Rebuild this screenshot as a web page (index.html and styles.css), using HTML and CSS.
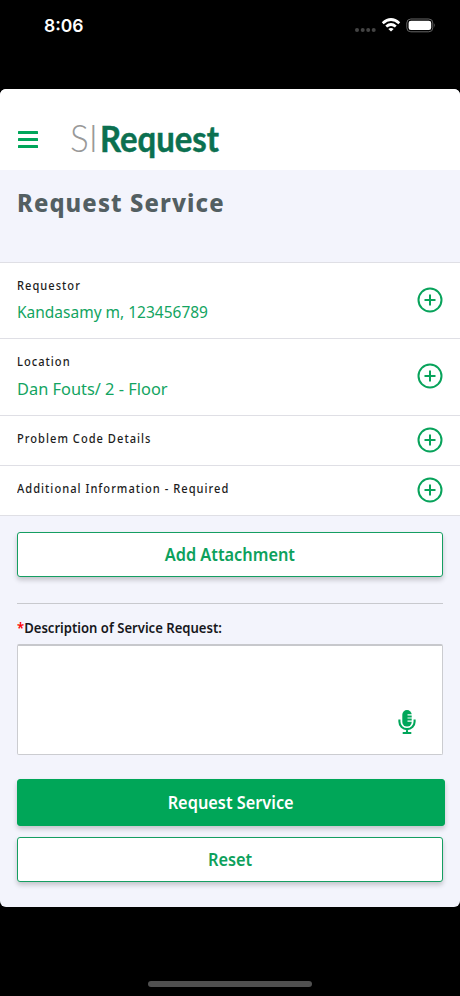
FILE: index.html
```html
<!DOCTYPE html>
<html lang="en">
<head>
<meta charset="utf-8">
<title>Request Service</title>
<link rel="stylesheet" href="styles.css">
</head>
<body>
<div class="status">
  <span class="time">8:06</span>
  <svg class="status-icons" width="84" height="20" viewBox="0 0 84 20">
    <g fill="#444"><circle cx="5" cy="14" r="2"/><circle cx="10.7" cy="14" r="2"/><circle cx="16.2" cy="14" r="2"/><circle cx="21.7" cy="14" r="2"/></g>
    <g fill="none" stroke="#fff" stroke-width="2.7"><path d="M30.7 7.2Q39 -.2 47.3 7.2"/><path d="M34.200 10.600Q39 6.400 43.800 10.600"/></g>
    <path d="M36.3 12.9Q39 10.9 41.700 12.900L39 15.600z" fill="#fff"/>
    <rect x="54.8" y="3" width="26" height="12.8" rx="4" fill="none" stroke="#666"/>
    <rect x="56.6" y="4.7" width="22.6" height="9.4" rx="2.4" fill="#fff"/>
    <path d="M82.2 7.3q1.5 2.1 0 4.2z" fill="#777"/>
  </svg>
</div>
<main class="app">
  <header class="topbar">
    <svg class="menu" width="20" height="18" viewBox="0 0 20 18" fill="#00a65a"><rect y="0" width="20" height="3" rx=".5"/><rect y="7" width="20" height="3" rx=".5"/><rect y="14" width="20" height="3" rx=".5"/></svg>
    <svg class="logo" width="152" height="44" viewBox="0 0 152 44">
      <text x="-1" y="32" class="logo-si" textLength="28" lengthAdjust="spacingAndGlyphs">SI</text>
      <text x="29" y="32" class="logo-name" textLength="119" lengthAdjust="spacingAndGlyphs">Request</text>
    </svg>
  </header>
  <h1><span class="fit">Request Service</span></h1>
  <section class="list">
    <div class="row tall">
      <div class="info"><span class="label">Requestor</span><span class="value requestor">Kandasamy m, 123456789</span></div>
      <svg class="plus" viewBox="0 0 26 26"><circle cx="13" cy="13" r="11.5"/><path d="M13 7.500v11M7.500 13h11"/></svg>
    </div>
    <div class="row tall">
      <div class="info"><span class="label">Location</span><span class="value location">Dan Fouts/ 2 - Floor</span></div>
      <svg class="plus" viewBox="0 0 26 26"><circle cx="13" cy="13" r="11.5"/><path d="M13 7.500v11M7.500 13h11"/></svg>
    </div>
    <div class="row">
      <div class="info"><span class="label">Problem Code Details</span></div>
      <svg class="plus" viewBox="0 0 26 26"><circle cx="13" cy="13" r="11.5"/><path d="M13 7.500v11M7.500 13h11"/></svg>
    </div>
    <div class="row">
      <div class="info"><span class="label">Additional Information - Required</span></div>
      <svg class="plus" viewBox="0 0 26 26"><circle cx="13" cy="13" r="11.5"/><path d="M13 7.500v11M7.500 13h11"/></svg>
    </div>
  </section>
  <section class="form">
    <button class="btn attach"><span>Add Attachment</span></button>
    <hr>
    <label class="desc"><span class="req">*</span>Description of Service Request:</label>
    <div class="area">
      <svg width="18" height="25" viewBox="0 0 18 25">
        <rect x="4.3" y="0" width="9.4" height="16.6" rx="4.7" fill="#00a65a"/>
        <path d="M9.5 4.9H14M9.5 8H14M9.5 11.1H14" stroke="#fff" stroke-width="1.2"/>
        <path d="M1.4 9.5v2.3a7.6 7.3 0 0 0 15.2 0V9.5M9 19v4M4.7 23h8.6" fill="none" stroke="#00a65a" stroke-width="2.1"/>
      </svg>
    </div>
    <button class="btn primary"><span>Request Service</span></button>
    <button class="btn reset"><span>Reset</span></button>
  </section>
</main>
<div class="home"></div>
</body>
</html>
```

FILE: styles.css
```css
* { box-sizing: border-box; }
body {
  margin: 0;
  width: 460px;
  height: 996px;
  background: #000;
  font-family: "Noto Sans", "Open Sans", sans-serif;
  overflow: hidden;
  display: flex;
  flex-direction: column;
}
.status {
  height: 89px;
  flex: none;
  display: flex;
  justify-content: space-between;
  align-items: flex-start;
  padding: 16px 24px 0 44px;
}
.time {
  color: #fff;
  font: 600 17.5px/20px Inter, sans-serif;
}
.app {
  height: 818px;
  flex: none;
  background: #f3f4fc;
  border-radius: 6px;
  overflow: hidden;
}
.topbar {
  height: 81px;
  background: #fff;
  display: flex;
  align-items: flex-start;
  padding: 31px 18px 0;
}
.menu { margin-top: 11px; }
.logo { margin-left: 33px; overflow: visible; }
.logo-si { font: 300 38px Lato, sans-serif; fill: #999; }
.logo-name { font: 700 36px Lato, sans-serif; fill: #0b7050; stroke: #0b7050; stroke-width: .5px; }
h1 {
  margin: 0;
  height: 92px;
  padding: 14px 17px 0;
  font-size: 25.5px;
  line-height: 36px;
  font-weight: 800;
  color: #535f62;
  letter-spacing: 1.2px;
  white-space: nowrap;
}
.fit {
  display: inline-block;
  transform: scaleX(.93);
  transform-origin: left;
}
.row {
  height: 50px;
  background: #fff;
  border-top: 1px solid #dfdfe5;
  display: flex;
  justify-content: space-between;
  padding: 11px 17px 0;
}
.row.tall { height: 77px; }
.row.tall:first-child { height: 76px; }
.row:last-child { height: 51px; border-bottom: 1px solid #dfdfe5; }
.info { display: flex; flex-direction: column; align-items: flex-start; white-space: nowrap; }
.label {
  margin-top: 1px;
  font-size: 12px;
  line-height: 22px;
  font-weight: 500;
  color: #1c1c1c;
  letter-spacing: 1.1px;
  transform: scaleX(.925);
  transform-origin: left;
}
.value {
  margin-top: 3px;
  font-size: 17px;
  line-height: 26px;
  color: #12a461;
  transform-origin: left;
}
.requestor { transform: scaleX(.911); margin-top: 2px; }
.location { transform: scaleX(.963); }
.plus {
  width: 26px;
  height: 26px;
  margin-top: -.5px;
  fill: none;
  stroke: #08a35b;
  stroke-width: 2;
}
.tall .plus { margin-top: 13px; }
.tall:first-child .plus { margin-top: 12.5px; }
.form { padding: 16px 17px 0; }
.btn {
  display: flex;
  align-items: center;
  justify-content: center;
  width: 426px;
  height: 45px;
  padding: 1px 0 0;
  border: 1px solid #159e62;
  border-radius: 3px;
  background: #fff;
  color: #0da15c;
  font: 600 17px/24px "Noto Sans", sans-serif;
  box-shadow: 0 3px 5px rgba(0, 0, 0, .2);
}
.btn span { transform: scaleX(.96); }
hr {
  margin: 26px 0 0;
  border: 0;
  border-top: 1px solid #c8c9ce;
}
.desc {
  display: block;
  margin-top: 13px;
  font-size: 14px;
  line-height: 22px;
  font-weight: 600;
  color: #17171b;
  white-space: nowrap;
  transform: scaleX(.935);
  transform-origin: left;
}
.req { color: #f00; }
.area {
  margin-top: 5px;
  height: 111px;
  background: #fff;
  border: 1px solid #cbccd0;
  border-top: 2px solid #c7c8cc;
  border-radius: 2px;
  display: flex;
  justify-content: flex-end;
  align-items: flex-end;
  padding: 0 26px 19px;
}
.btn.primary {
  margin-top: 24px;
  width: 428px;
  height: 47px;
  padding: 0;
  background: #00a658;
  border-color: #00a658;
  color: #fff;
}
.btn.reset { margin-top: 11px; }
.home {
  width: 164px;
  height: 6px;
  margin: 74px auto 0;
  border-radius: 3px;
  background: #505050;
  flex: none;
}
```
